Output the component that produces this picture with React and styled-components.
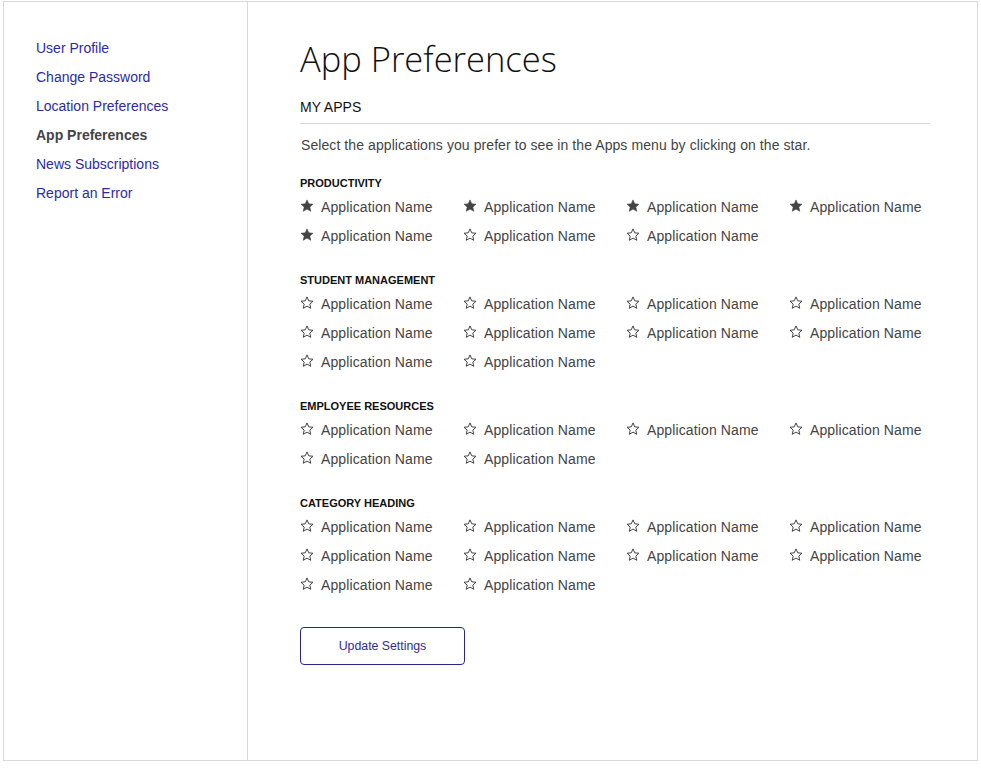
import React from "react";
import styled, { createGlobalStyle } from "styled-components";

const Global = createGlobalStyle`
  html, body { margin: 0; padding: 0; background: #ffffff; }
  body { font-family: "Liberation Sans", Arial, sans-serif; }
  * { box-sizing: border-box; }
`;

const Page = styled.div`
  padding: 1px 0 0 3px;
`;

const Frame = styled.div`
  width: 975px;
  height: 760px;
  border: 1px solid #d9d9d9;
  display: flex;
`;

const Sidebar = styled.nav`
  width: 244px;
  flex: none;
  border-right: 1px solid #d9d9d9;
  padding: 36px 0 0 32px;
  display: flex;
  flex-direction: column;
  gap: 9px;
`;

const NavLink = styled.a`
  font-size: 14px;
  line-height: 20px;
  color: ${(p) => (p.$active ? "#444444" : "#2b2ba6")};
  font-weight: ${(p) => (p.$active ? 700 : 400)};
  text-decoration: none;
  cursor: pointer;
`;

const Main = styled.main`
  flex: 1;
  min-width: 0;
  padding: 37px 47px 0 52px;
  display: flex;
  flex-direction: column;
`;

const Title = styled.h1`
  margin: 0;
  font-family: "Open Sans", "Liberation Sans", sans-serif;
  font-weight: 300;
  font-size: 34.5px;
  line-height: 40px;
  color: #111111;
`;

const SectionHeading = styled.h2`
  margin: 18px 0 0;
  font-size: 14px;
  line-height: 20px;
  font-weight: 400;
  color: #111111;
  padding-bottom: 6px;
  border-bottom: 1px solid #d6d6d6;
`;

const Description = styled.p`
  margin: 11px 0 0;
  font-size: 14px;
  line-height: 20px;
  letter-spacing: 0.08px;
  color: #444444;
  padding-left: 1px;
`;

const Category = styled.section`
  margin-top: ${(p) => (p.$first ? "20px" : "22px")};
`;

const CategoryTitle = styled.h3`
  margin: 0;
  font-size: 11px;
  line-height: 16px;
  font-weight: 700;
  color: #111111;
  text-transform: uppercase;
`;

const AppGrid = styled.div`
  margin-top: 1px;
  display: grid;
  grid-template-columns: repeat(4, 163px);
`;

const AppItem = styled.label`
  display: flex;
  align-items: center;
  gap: 7px;
  height: 29px;
  font-size: 14px;
  letter-spacing: 0.12px;
  color: #444444;
  cursor: pointer;
  white-space: nowrap;
`;

const StarBox = styled.span`
  width: 14px;
  height: 14px;
  display: inline-flex;
  margin-top: -1px;
`;

const UpdateButton = styled.button`
  margin-top: 28px;
  width: 165px;
  height: 38px;
  border: 1px solid #27278a;
  border-radius: 4px;
  background: #ffffff;
  color: #2e2e9a;
  font-family: "Liberation Sans", Arial, sans-serif;
  font-size: 12.3px;
  cursor: pointer;
`;

const STAR =
  "M7 0.9 L8.75 4.85 L13 5.25 L9.8 8.1 L10.75 12.3 L7 10.1 L3.25 12.3 L4.2 8.1 L1 5.25 L5.25 4.85 Z";

const Star = ({ filled }) => (
  <StarBox>
    <svg width="14" height="14" viewBox="0 0 14 14">
      <path
        d={STAR}
        fill={filled ? "#444444" : "none"}
        stroke="#444444"
        strokeWidth={filled ? 0.6 : 1}
        strokeLinejoin="round"
      />
    </svg>
  </StarBox>
);

const categories = [
  { name: "Productivity", apps: [true, true, true, true, true, false, false] },
  { name: "Student Management", apps: Array(10).fill(false) },
  { name: "Employee Resources", apps: Array(6).fill(false) },
  { name: "Category Heading", apps: Array(10).fill(false) },
];

const navItems = [
  "User Profile",
  "Change Password",
  "Location Preferences",
  "App Preferences",
  "News Subscriptions",
  "Report an Error",
];

export default function App() {
  return (
    <>
      <Global />
      <Page>
        <Frame>
          <Sidebar>
            {navItems.map((n) => (
              <NavLink key={n} $active={n === "App Preferences"}>
                {n}
              </NavLink>
            ))}
          </Sidebar>
          <Main>
            <Title>App Preferences</Title>
            <SectionHeading>MY APPS</SectionHeading>
            <Description>
              Select the applications you prefer to see in the Apps menu by clicking on the star.
            </Description>
            {categories.map((c, ci) => (
              <Category key={c.name} $first={ci === 0}>
                <CategoryTitle>{c.name}</CategoryTitle>
                <AppGrid>
                  {c.apps.map((f, i) => (
                    <AppItem key={i}>
                      <Star filled={f} />
                      Application Name
                    </AppItem>
                  ))}
                </AppGrid>
              </Category>
            ))}
            <div>
              <UpdateButton>Update Settings</UpdateButton>
            </div>
          </Main>
        </Frame>
      </Page>
    </>
  );
}
